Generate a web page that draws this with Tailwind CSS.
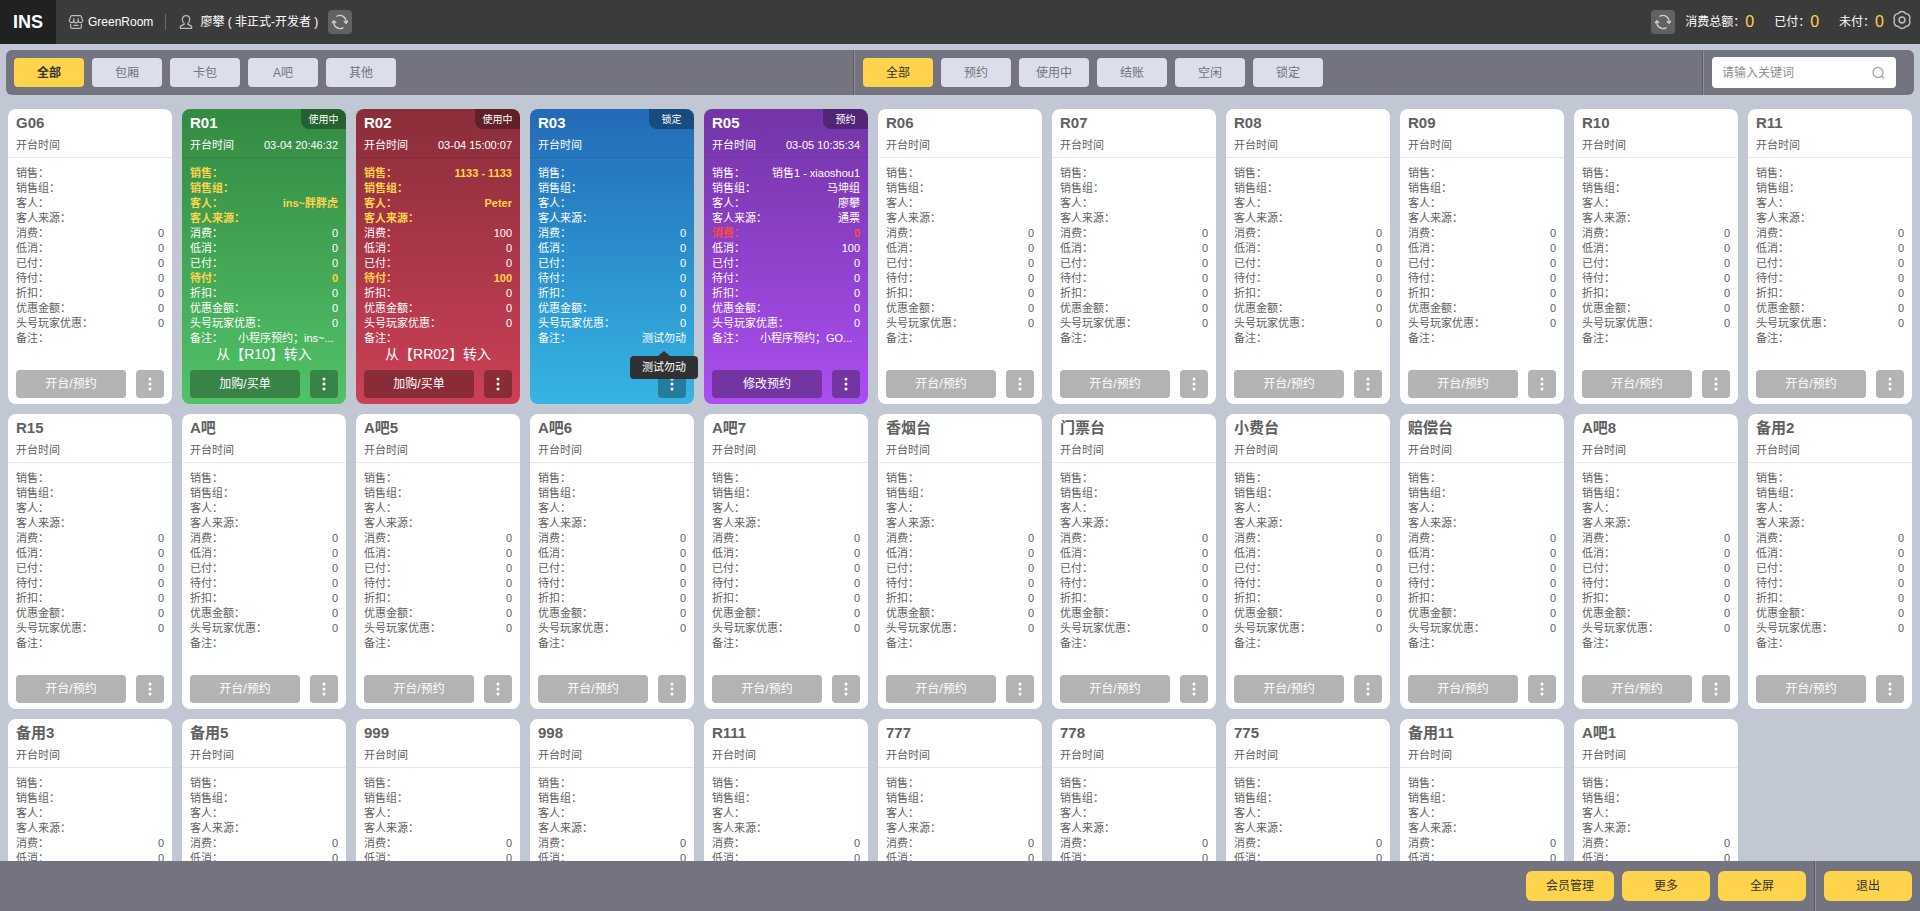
<!DOCTYPE html>
<html lang="zh-CN">
<head>
<meta charset="utf-8">
<meta name="viewport" content="width=device-width, initial-scale=1">
<title>INS GreenRoom</title>
<script src="https://cdn.jsdelivr.net/npm/@tailwindcss/browser@4"></script>
</head>
<body class="flex h-screen flex-col overflow-hidden bg-[#c1c7d3] font-['Liberation_Sans','Noto_Sans_CJK_SC',sans-serif] text-xs text-[#606060]">

<svg class="hidden">
  <symbol id="i-refresh" viewBox="0 0 16 16" fill="none" stroke="currentColor" stroke-width="1.4" stroke-linecap="round" stroke-linejoin="round">
    <path d="M5 2.2A6.3 6.3 0 0 1 14.2 8.6"/><path d="M12.3 7.5l1.9 1.7 1.5-2"/>
    <path d="M11 13.8A6.3 6.3 0 0 1 1.8 7.4"/><path d="M3.7 8.5L1.8 6.8.3 8.8"/>
  </symbol>
  <symbol id="i-dots" viewBox="0 0 4 14" fill="currentColor">
    <circle cx="2" cy="2" r="1.5"/><circle cx="2" cy="7" r="1.5"/><circle cx="2" cy="12" r="1.5"/>
  </symbol>
</svg>

<header class="flex h-11 shrink-0 items-center bg-[#3b3b3b] text-white">
  <div class="flex h-11 w-14 items-center justify-center bg-[#212121] text-lg font-bold">INS</div>
  <svg class="ml-3 size-4 text-[#bdbdbd]" viewBox="0 0 16 16" fill="none" stroke="currentColor" stroke-width="1.2" stroke-linecap="round" stroke-linejoin="round">
    <path d="M4 1.600h8c.6 0 1 .3 1.200.8l1.400 3.800a2.200 2.200 0 0 1-4.400.4a2.200 2.200 0 0 1-4.400 0a2.200 2.200 0 0 1-4.400-.4l1.400-3.800c.2-.5.6-.8 1.200-.8z"/><path d="M5.800 6.400V4.600M10.200 6.400V4.600"/><path d="M2.600 10.300v2.600c0 .9.500 1.400 1.400 1.400h8c.9 0 1.400-.5 1.400-1.400v-2.600"/><path d="M5.800 11.300h4.400"/>
  </svg>
  <span class="ml-1">GreenRoom</span>
  <span class="ml-3 h-4 w-px bg-[#6b6b6b]"></span>
  <svg class="ml-3 size-4 text-[#bdbdbd]" viewBox="0 0 16 16" fill="none" stroke="currentColor" stroke-width="1.2" stroke-linejoin="round">
    <path d="M8 1.700c2.200 0 3.700 1.600 3.700 3.800 0 1.700-.8 3-1.900 3.900v1l3.300 1.500c.4.200.6.500.6.900v1.500H2.300v-1.500c0-.4.200-.7.600-.9l3.300-1.500v-1C5.100 8.500 4.300 7.200 4.300 5.500c0-2.200 1.500-3.800 3.700-3.800z"/>
  </svg>
  <span class="ml-1.5">廖攀 ( 非正式-开发者 )</span>
  <button type="button" aria-label="刷新" class="ml-2.5 flex size-6 items-center justify-center rounded bg-[#626262] text-[#d0d0d0]"><svg class="size-4"><use href="#i-refresh"/></svg></button>
  <div class="ml-auto flex items-center gap-5 pr-2">
    <button type="button" aria-label="刷新金额" class="-mr-2.5 flex size-6 items-center justify-center rounded bg-[#626262] text-[#d0d0d0]"><svg class="size-4"><use href="#i-refresh"/></svg></button>
    <span class="flex items-center">消费总额：<b class="text-base leading-5 font-normal text-[#ffd44c]">0</b></span>
    <span class="flex items-center">已付：<b class="text-base leading-5 font-normal text-[#ffd44c]">0</b></span>
    <span class="flex items-center">未付：<b class="text-base leading-5 font-normal text-[#ffd44c]">0</b></span>
    <button type="button" aria-label="设置" class="-ml-3 pb-1 text-[#bdbdbd]">
      <svg class="size-5" viewBox="0 0 20 20" fill="none" stroke="currentColor" stroke-width="1.500" stroke-linejoin="round">
        <path d="M17.400 10A4.300 4.300 0 0 1 13.700 16.400A4.300 4.300 0 0 1 6.300 16.400A4.300 4.300 0 0 1 2.600 10A4.300 4.300 0 0 1 6.300 3.600A4.300 4.300 0 0 1 13.700 3.600A4.300 4.300 0 0 1 17.400 10z"/><circle cx="10" cy="10" r="2.900"/>
      </svg>
    </button>
  </div>
</header>

<nav class="mx-1.5 mt-1.5 flex shrink-0 items-stretch rounded-md bg-[#747380] text-[#73747c]">
  <div id="areas" class="flex flex-1 items-center gap-2 py-2 pl-2"></div>
  <span class="w-0.5 border-r border-[#8f8e9a] bg-[#5c5b67]"></span>
  <div id="states" class="flex flex-1 items-center gap-2 py-2 pl-2"></div>
  <span class="w-0.5 border-r border-[#8f8e9a] bg-[#5c5b67]"></span>
  <div class="py-[7px] pr-[18px] pl-2">
    <label class="flex h-[31px] w-[184px] items-center rounded bg-white px-2.5">
      <input type="text" aria-label="关键词" placeholder="请输入关键词" class="min-w-0 flex-1 outline-none placeholder:text-[#8e8e8e]">
      <svg class="size-4 text-[#a5a5a5]" viewBox="0 0 16 16" fill="none" stroke="currentColor" stroke-width="1.300" stroke-linecap="round"><circle cx="8" cy="7.500" r="5"/><path d="M11.800 11.300l1.700 1.700"/></svg>
    </label>
  </div>
</nav>

<main id="rooms" class="mt-3.5 grid min-h-0 flex-1 auto-rows-max grid-cols-11 gap-2.5 overflow-hidden px-2"></main>

<footer class="flex h-[50px] shrink-0 items-center justify-end gap-2 bg-[#747380] pr-2 text-[#333333]">
  <button type="button" class="h-[30px] w-[88px] rounded-md bg-[#ffd44c]">会员管理</button>
  <button type="button" class="h-[30px] w-[88px] rounded-md bg-[#ffd44c]">更多</button>
  <button type="button" class="h-[30px] w-[88px] rounded-md bg-[#ffd44c]">全屏</button>
  <span class="h-full w-0.5 border-r border-[#8f8e9a] bg-[#5c5b67]"></span>
  <button type="button" class="h-[30px] w-[88px] rounded-md bg-[#ffd44c]">退出</button>
</footer>

<script>
  const chips = (names, activeClass) => names.map((n, i) =>
    `<button type="button" class="h-[29px] w-[70px] rounded ${i ? 'bg-[#dcdeea]' : activeClass}">${n}</button>`).join('');
  document.getElementById('areas').innerHTML = chips(['全部', '包厢', '卡包', 'A吧', '其他'], 'bg-[#ffd44c] text-[#333333] font-bold');
  document.getElementById('states').innerHTML = chips(['全部', '预约', '使用中', '结账', '空闲', '锁定'], 'bg-[#ffd44c] text-[#333333]');

  const LABELS = ['销售', '销售组', '客人', '客人来源', '消费', '低消', '已付', '待付', '折扣', '优惠金额', '头号玩家优惠', '备注'];
  const EMPTY = ['', '', '', '', '0', '0', '0', '0', '0', '0', '0', ''];
  const THEMES = {
    idle: { card: 'bg-white', line: 'border-[#e8e8e8]', button: 'bg-[#b3b3b3]' },
    green: { card: 'bg-linear-to-b from-[#338a42] to-[#52c268] text-white', line: 'border-black/10', button: 'bg-[#388346]' },
    red: { card: 'bg-linear-to-b from-[#8a2e3a] to-[#cc4057] text-white', line: 'border-black/10', button: 'bg-[#8a2c38]' },
    blue: { card: 'bg-linear-to-b from-[#246ab6] to-[#36b5e2] text-white', line: 'border-black/10', button: 'bg-[#267c9f]' },
    purple: { card: 'bg-linear-to-b from-[#7434a6] to-[#aa4ff1] text-white', line: 'border-black/10', button: 'bg-[#7435a3]' },
  };
  const YELLOW = 'font-bold text-[#ffd44c]', RED = 'font-bold text-[#ff4a3d]';
  const SPECIAL = {
    R01: { theme: 'green', tag: '使用中', time: '03-04 20:46:32', action: '加购/买单', transfer: '从【R10】转入',
      values: { 2: 'ins~胖胖虎', 11: '小程序预约；ins~...' }, marks: { 0: YELLOW, 1: YELLOW, 2: YELLOW, 3: YELLOW, 7: YELLOW } },
    R02: { theme: 'red', tag: '使用中', time: '03-04 15:00:07', action: '加购/买单', transfer: '从【RR02】转入',
      values: { 0: '1133 - 1133', 2: 'Peter', 4: '100', 7: '100' }, marks: { 0: YELLOW, 1: YELLOW, 2: YELLOW, 3: YELLOW, 7: YELLOW } },
    R03: { theme: 'blue', tag: '锁定', action: '', values: { 11: '测试勿动' }, tip: '测试勿动' },
    R05: { theme: 'purple', tag: '预约', time: '03-05 10:35:34', action: '修改预约',
      values: { 0: '销售1 - xiaoshou1', 1: '马坤组', 2: '廖攀', 3: '通票', 5: '100', 11: '小程序预约；GO...' }, marks: { 4: RED } },
  };
  const NAMES = ['G06', 'R01', 'R02', 'R03', 'R05', 'R06', 'R07', 'R08', 'R09', 'R10', 'R11',
    'R15', 'A吧', 'A吧5', 'A吧6', 'A吧7', '香烟台', '门票台', '小费台', '赔偿台', 'A吧8', '备用2',
    '备用3', '备用5', '999', '998', 'R111', '777', '778', '775', '备用11', 'A吧1'];

  const tooltip = text => `<span role="tooltip" class="absolute top-full left-1/2 z-10 mt-2.5 flex h-[23px] -translate-x-1/2 items-center rounded bg-[#303133] px-3 whitespace-nowrap text-white">
      <svg class="absolute bottom-full left-1/2 h-[5px] w-3 -translate-x-1/2" viewBox="0 0 12 5"><path d="M0 5L6 0l6 5z" fill="#303133"/></svg>${text}</span>`;

  const row = (label, i, room) => {
    const value = room.values?.[i] ?? EMPTY[i];
    const long = i === 11 && value.endsWith('...');
    return `<div class="flex justify-between ${room.marks?.[i] ?? ''}">
      <dt class="whitespace-nowrap">${label}：</dt>
      <dd class="relative whitespace-nowrap ${long ? 'w-[100px]' : ''}">${value}${i === 11 && room.tip ? tooltip(room.tip) : ''}</dd></div>`;
  };

  const card = name => {
    const room = SPECIAL[name] ?? { theme: 'idle', action: '开台/预约' };
    const t = THEMES[room.theme];
    return `<article class="relative rounded-lg text-[11px] leading-[15px] ${t.card}">
      ${room.tag ? `<span class="absolute top-0 right-0 flex h-5 w-[45px] items-center justify-center rounded-tr-lg rounded-bl-lg bg-black/30 text-[10px]">${room.tag}</span>` : ''}
      <header class="border-b px-2 pt-1 pb-1 ${t.line}">
        <h2 class="text-[15px] leading-5 font-bold">${name}</h2>
        <p class="flex justify-between pt-1 leading-4"><span>开台时间</span><time>${room.time ?? ''}</time></p>
      </header>
      <dl class="px-2 pt-2">${LABELS.map((l, i) => row(l, i, room)).join('')}</dl>
      <p class="h-6 text-center text-sm leading-4 whitespace-nowrap">${room.transfer ?? ''}</p>
      <div class="flex justify-end gap-2.5 px-2 pb-1.5 text-white">
        ${room.action ? `<button type="button" class="h-7 flex-1 rounded text-xs ${t.button}">${room.action}</button>` : ''}
        <button type="button" aria-label="更多操作" class="flex size-7 items-center justify-center rounded ${t.button}"><svg class="h-3.5 w-1"><use href="#i-dots"/></svg></button>
      </div>
    </article>`;
  };
  document.getElementById('rooms').innerHTML = NAMES.map(card).join('');
</script>
</body>
</html>
